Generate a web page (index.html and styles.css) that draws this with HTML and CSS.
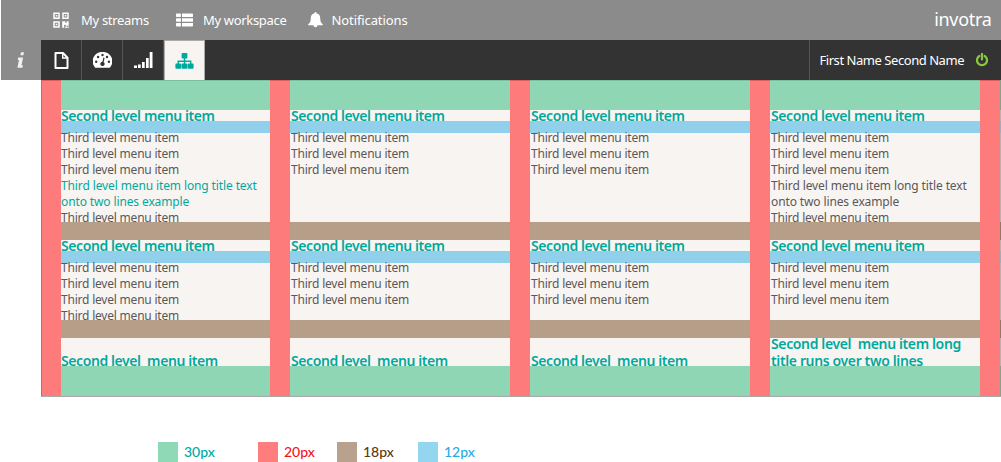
FILE: index.html
```html
<!DOCTYPE html>
<html lang="en">
<head>
<meta charset="utf-8">
<title>invotra</title>
<link rel="stylesheet" href="styles.css">
</head>
<body>
<header class="topbar">
  <nav class="topnav">
    <a class="toplink streams"><svg width="16" height="16" viewBox="0 0 16 16"><path class="line" d="M1 1.200h5v5h-5zM10 1.200h5v5h-5zM1 10h5v5h-5z"/><path class="fill" d="M2.700 2.900h1.600v1.600H2.700zM11.700 2.900h1.600v1.600h-1.600zM2.700 11.700h1.600v1.600H2.700zM9.200 9.200h3v1.500h1.500V9.200h2v4.500h-3v-1h-1.500v3H9.200zM12.300 14.400H14V16h-1.700zM14.500 14.400h1.200V16h-1.200z"/></svg><span>My streams</span></a>
    <a class="toplink workspace"><svg width="17" height="14" viewBox="0 0 17 14"><path class="fill" d="M0 1.200q0-.7.700-.7h3.500q.7 0 .7.700v2q0 .7-.7.700H.700Q0 3.900 0 3.200zM6 .500h10.300q.7 0 .7.700v2q0 .7-.7.700H6zM0 6q0-.7.700-.7H4.900v3.400H.700Q0 8.700 0 8zM6 5.300h11v3.400H6zM0 10.800q0-.7.700-.7H4.900v3.400H.700Q0 13.500 0 12.800zM6 10.100h11v2.700q0 .7-.7.700H6z"/></svg><span>My workspace</span></a>
    <a class="toplink notices"><svg width="15" height="16" viewBox="0 0 15 16"><path class="fill" d="M7.500 0q1 0 1 1.200C11.300 1.800 12.200 3.800 12.200 6c0 3.600.9 4.900 2.600 6.200v1H.200v-1C1.900 10.900 2.800 9.600 2.800 6c0-2.200.9-4.200 3.700-4.800Q6.500 0 7.500 0zM5.400 13.200h4.200q-.3 2-2.100 2t-2.100-2z"/></svg><span>Notifications</span></a>
  </nav>
  <div class="brand">invotra</div>
</header>
<div class="toolbar">
  <div class="info"><svg width="8" height="17" viewBox="0 0 8 17"><path class="fill" d="M4 .300h3l-.6 3h-3zM1.200 5.500h4.900L4.500 13.300h1.400l-.5 2.400H.400L2 7.900H.700z"/></svg></div>
  <div class="tab"><svg width="15" height="17" viewBox="0 0 15 17"><path class="outline" d="M1.500 1h7.500l4.500 4.700V16h-12z"/><path class="thin" d="M8.700 1v5h4.800"/></svg></div>
  <div class="tab"><svg width="19" height="16" viewBox="0 0 19 16"><path class="fill" d="M9.500 0A9.300 9.300 0 0 0 1.800 15.200q.3.500.8.500h13.800q.5 0 .8-.5A9.300 9.300 0 0 0 9.500 0z"/><g class="dots"><circle cx="3.200" cy="9.700" r="1.200"/><circle cx="5.100" cy="5" r="1.200"/><circle cx="9.500" cy="3" r="1.200"/><circle cx="14" cy="5" r="1.200"/><circle cx="15.900" cy="9.700" r="1.200"/><path d="M10.400 5.600l1.200.3-1 4.100a2.200 2.200 0 1 1-1.200-.3z"/></g></svg></div>
  <div class="tab"><svg width="19" height="17" viewBox="0 0 19 17"><path class="fill" d="M0 13.500h3V16H0zM4 12.500h2.700V16H4zM8 10h2.700v6H8zM12 6h2.700v10H12zM15.700 0h2.800v16h-2.800z"/></svg></div>
  <div class="tab active"><svg width="19" height="16" viewBox="0 0 19 16"><path class="fill" d="M6.600 1q0-.9.900-.9h4q.9 0 .9.900v3.500q0 .9-.9.900h-1.300V7.500h6.200v3h1.300q.9 0 .9.900v3.400q0 .9-.9.900h-4q-.9 0-.9-.9v-3.400q0-.9.900-.9h1.300V8.900h-4.800v1.600h1.300q.9 0 .9.900v3.400q0 .9-.9.900h-4q-.9 0-.9-.9v-3.400q0-.9.900-.9h1.300V8.900H4v1.600h1.300q.9 0 .9.900v3.400q0 .9-.9.900h-4q-.9 0-.9-.9v-3.400q0-.9.900-.9h1.300v-3h6.200V5.400H7.500q-.9 0-.9-.9z"/></svg></div>
  <div class="user"><span>First Name Second Name</span><svg width="12" height="14" viewBox="0 0 12 14"><path class="power" d="M3.300 3A5 5 0 1 0 8.700 3M6 .800V6.500"/></svg></div>
</div>
<main class="panel">
  <div class="gutter"></div>
  <section class="col first">
    <div class="band pad"></div>
    <h2>Second level menu item</h2><div class="band gap"></div>
    <ul class="tall"><li>Third level menu item</li><li>Third level menu item</li><li>Third level menu item</li><li class="long on">Third level menu item long title text<br>onto two lines example</li><li>Third level menu item</li></ul>
    <div class="band split"></div>
    <h2>Second level menu item</h2><div class="band gap"></div>
    <ul class="short"><li>Third level menu item</li><li>Third level menu item</li><li>Third level menu item</li><li>Third level menu item</li></ul>
    <div class="band split"></div>
    <h2 class="last">Second level  menu item</h2>
    <div class="band pad"></div>
  </section>
  <div class="gutter"></div>
  <section class="col">
    <div class="band pad"></div>
    <h2>Second level menu item</h2><div class="band gap"></div>
    <ul class="tall"><li>Third level menu item</li><li>Third level menu item</li><li>Third level menu item</li></ul>
    <div class="band split"></div>
    <h2>Second level menu item</h2><div class="band gap"></div>
    <ul class="short"><li>Third level menu item</li><li>Third level menu item</li><li>Third level menu item</li></ul>
    <div class="band split"></div>
    <h2 class="last">Second level  menu item</h2>
    <div class="band pad"></div>
  </section>
  <div class="gutter"></div>
  <section class="col">
    <div class="band pad"></div>
    <h2>Second level menu item</h2><div class="band gap"></div>
    <ul class="tall"><li>Third level menu item</li><li>Third level menu item</li><li>Third level menu item</li></ul>
    <div class="band split"></div>
    <h2>Second level menu item</h2><div class="band gap"></div>
    <ul class="short"><li>Third level menu item</li><li>Third level menu item</li><li>Third level menu item</li></ul>
    <div class="band split"></div>
    <h2 class="last">Second level  menu item</h2>
    <div class="band pad"></div>
  </section>
  <div class="gutter"></div>
  <section class="col">
    <div class="band pad"></div>
    <h2>Second level menu item</h2><div class="band gap"></div>
    <ul class="tall"><li>Third level menu item</li><li>Third level menu item</li><li>Third level menu item</li><li class="long">Third level menu item long title text<br>onto two lines example</li><li>Third level menu item</li></ul>
    <div class="band split"></div>
    <h2>Second level menu item</h2><div class="band gap"></div>
    <ul class="short"><li>Third level menu item</li><li>Third level menu item</li><li>Third level menu item</li></ul>
    <div class="band split"></div>
    <h2 class="last double"><span>Second level  menu item long<br>title runs over two lines</span></h2>
    <div class="band pad"></div>
  </section>
  <div class="gutter"></div>
  <div class="edge"></div>
</main>
<footer class="legend">
  <div class="key green"><i></i><span>30px</span></div>
  <div class="key red"><i></i><span>20px</span></div>
  <div class="key brown"><i></i><span>18px</span></div>
  <div class="key blue"><i></i><span>12px</span></div>
</footer>
</body>
</html>
```

FILE: styles.css
```css
* { box-sizing: border-box; }
body { margin: 0; background: #fff; font-family: "Noto Sans", sans-serif; overflow: hidden; }
svg { display: block; flex: none; }
.fill { fill: currentColor; }
.line { fill: none; stroke: currentColor; stroke-width: 1.5; }
.outline { fill: none; stroke: currentColor; stroke-width: 2; stroke-linejoin: round; }
.thin { fill: none; stroke: currentColor; stroke-width: 1.4; }
.dots { fill: #333; }
.topbar { display: flex; justify-content: space-between; height: 40px; margin-left: 1px; padding: 0 9.500px 0 52px; background: #8b8b8b; color: #fff; }
.topnav { display: flex; }
.toplink { display: flex; align-items: center; font-size: 13px; line-height: 40px; }
.toplink svg { margin-right: 12px; }
.streams { width: 123px; letter-spacing: -.3px; }
.workspace { width: 132px; letter-spacing: -.32px; }
.workspace svg { margin-right: 10px; }
.notices { letter-spacing: -.1px; }
.notices svg { margin-right: 8.500px; }
.brand { font-size: 18px; line-height: 39px; letter-spacing: -.3px; }
.toolbar { display: flex; height: 40px; margin-left: 1px; background: #333; color: #fff; }
.info { display: flex; width: 40px; align-items: center; justify-content: center; background: #8b8b8b; color: #f1f1f1; }
.tab { display: flex; width: 41px; align-items: center; justify-content: center; border-right: 1px solid #555; }
.tab.active { background: #f8f4f1; color: #00a99d; border: 1px solid #aaa; border-bottom: 0; }
.user { display: flex; width: 192px; margin-left: auto; padding-left: 9.500px; align-items: center; border-left: 1px solid #555; font-size: 13px; line-height: 40px; letter-spacing: -.45px; white-space: nowrap; }
.user svg { margin-left: 11.500px; }
.power { fill: none; stroke: #8cc63f; stroke-width: 2.2; stroke-linecap: round; }
.panel { display: grid; grid-template-columns: 20px 209px 20px 220px 20px 220px 20px 210px 20px 1px; height: 317px; margin-left: 41px; background: #f8f4f1; border-bottom: 1px solid #aaa; }
.gutter { background: #fd7b7a; border-top: 1px solid #d9605f; }
.gutter:first-child { border-left: 1px solid #d56262; }
.pad { height: 30px; background: #8ed6b4; }
.pad:first-child { border-top: 1px solid #7bc09f; }
.gap { height: 12px; background: #91d0eb; }
.split { height: 18px; background: #b69e89; }
.col { --indent: 1px; }
.col.first { --indent: 0px; }
.col h2 { display: flex; height: 11px; margin: 0; padding-left: var(--indent); align-items: center; color: #00a99d; font-size: 14px; font-weight: 600; line-height: 17px; letter-spacing: -.41px; white-space: pre; }
.col h2.last { height: 28px; padding-top: 17px; }
.col h2.double { padding-top: 0; letter-spacing: -.37px; }
ul { display: flow-root; margin: 0; padding: 0 0 0 var(--indent); list-style: none; color: #58585a; font-size: 12px; line-height: 16px; letter-spacing: -.21px; white-space: nowrap; }
ul li:first-child { margin-top: -3px; }
.tall { height: 89px; }
.short { height: 57px; }
.long { letter-spacing: -.12px; }
.on { color: #00a99d; }
.edge { background: linear-gradient(#78a88f 0 30px, #b4b4b4 30px 41px, #8fb4c4 41px 53px, #b4b4b4 53px 142px, #8b7b6b 142px 160px, #b4b4b4 160px 171px, #8fb4c4 171px 183px, #b4b4b4 183px 240px, #8b7b6b 240px 258px, #b4b4b4 258px 286px, #78a88f 286px); }
.legend { display: flex; margin: 45px 0 0 158px; font-family: Lato, sans-serif; font-size: 14px; font-weight: 500; line-height: 19px; }
.key { display: flex; gap: 6px; width: 100px; }
.key i { width: 20px; height: 20px; }
.green { color: #00a99d; } .green i { background: #8fd9b7; }
.red { width: 79px; color: #f1151b; } .red i { background: #ff7d7d; }
.brown { width: 81px; color: #603813; } .brown i { background: #b8a28e; }
.blue { color: #29abe2; } .blue i { background: #94d5f0; }
```
